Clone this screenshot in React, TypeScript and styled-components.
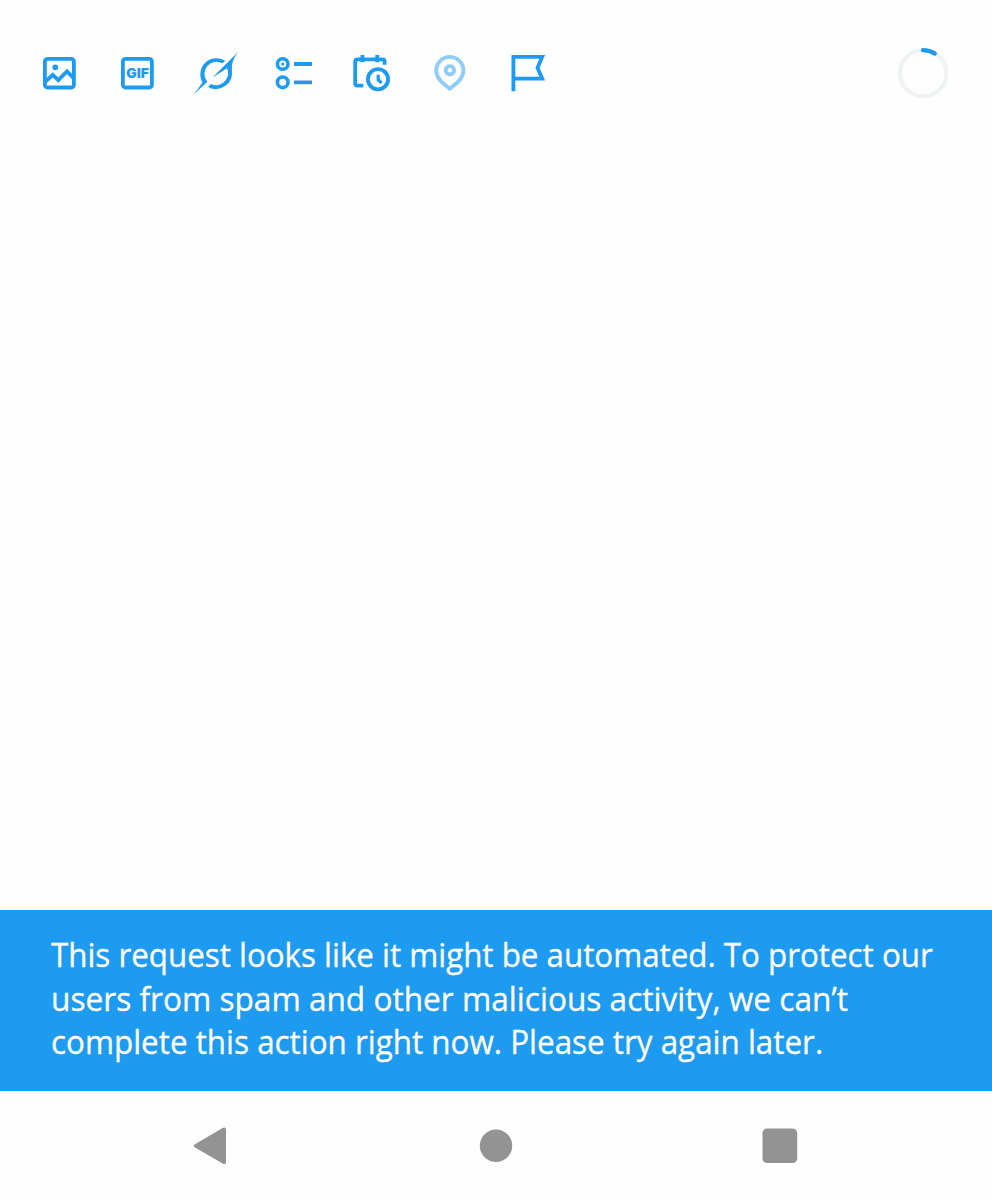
import React from "react";
import styled, { createGlobalStyle } from "styled-components";

const GlobalStyle = createGlobalStyle`
  body { margin: 0; background: #fefefe; }
`;

const Screen = styled.main`
  display: flex;
  flex-direction: column;
  height: 1200px;
  overflow: hidden;
  background: #fefefe;
`;

const Toolbar = styled.header`
  display: flex;
  align-items: center;
  justify-content: space-between;
  height: 54px;
  padding: 46px 42px 0 35px;
`;

const Tools = styled.div`
  display: flex;
  gap: 30px;
`;

const ToolButton = styled.button<{ $disabled?: boolean }>`
  width: 48px;
  height: 48px;
  padding: 0;
  border: 0;
  background: none;
  color: ${(p) => (p.$disabled ? "#8ecdf8" : "#1d9bf0")};
`;

const Glyph = styled.svg`
  display: block;
  width: 48px;
  height: 48px;
  overflow: visible;
  fill: none;
  stroke: currentColor;
  stroke-width: 3.8;
`;

const Progress = styled.svg`
  width: 54px;
  height: 54px;
  fill: none;
  stroke-width: 4.2;
`;

const Compose = styled.section`
  flex: 1;
`;

const Toast = styled.div`
  box-sizing: border-box;
  height: 181px;
  padding: 23.4px 51px 0;
  background: #1d9bf0;
  color: #fff;
  font: 400 33px/43.7px "Open Sans", "Noto Sans", sans-serif;
  -webkit-text-stroke: 0.3px #fff;
`;

const Line = styled.span<{ $condense: number }>`
  display: block;
  width: max-content;
  white-space: nowrap;
  transform: scaleX(${(p) => p.$condense});
  transform-origin: left;
`;

const NavBar = styled.nav`
  display: flex;
  align-items: center;
  justify-content: space-between;
  height: 108.5px;
  padding: 1px 188px 0 186px;
`;

const NavButton = styled.button`
  padding: 0;
  border: 0;
  background: none;
  color: #939393;
`;

const NavGlyph = styled.svg`
  display: block;
  width: 48px;
  height: 48px;
  fill: currentColor;
`;

const tools: { name: string; disabled?: boolean; art: React.ReactNode }[] = [
  {
    name: "Media",
    art: (
      <>
        <rect x="9.9" y="9.9" width="29" height="28.6" rx="2.6" />
        <path d="M9.9 33.2 17.7 25.9 23.3 31.2 32 22.4 39 29.4" />
        <circle cx="20.3" cy="18.3" r="2.9" fill="currentColor" stroke="none" />
      </>
    ),
  },
  {
    name: "GIF",
    art: (
      <>
        <rect x="9.9" y="9.9" width="29" height="28.6" rx="2.6" />
        <text
          x="13.2"
          y="29"
          textLength="22.6"
          lengthAdjust="spacingAndGlyphs"
          fill="currentColor"
          stroke="none"
          fontFamily="Inter, sans-serif"
          fontWeight="900"
          fontSize="13.4"
        >
          GIF
        </text>
      </>
    ),
  },
  {
    name: "Grok",
    art: (
      <g fill="currentColor" stroke="none">
        <path d="M34.3 11.8A16.2 16.2 0 0 0 11.3 33.2C10.2 35.8 6.4 40.6 2.7 45.3L16.5 32.8 15.5 31.5A12 12 0 0 1 31.3 14.3Z" />
        <path d="M47 3 21.3 28.7 36 19.2 36.8 21.6A12 12 0 0 1 20 34.9L17 37.9A16.2 16.2 0 0 0 40.9 21.4C40.9 14.5 41.6 11 47 3Z" />
      </g>
    ),
  },
  {
    name: "Poll",
    art: (
      <>
        <circle cx="13.7" cy="15" r="5.3" strokeWidth="3.6" />
        <circle cx="13.7" cy="33.3" r="5.3" strokeWidth="3.6" />
        <circle cx="13.7" cy="15" r="1.6" fill="currentColor" stroke="none" />
        <path d="M25 15H43M25 33.3H43" />
      </>
    ),
  },
  {
    name: "Schedule",
    art: (
      <>
        <path d="M16.3 36.7H10.6Q8.2 36.7 8.2 34.3V12.7Q8.2 10.3 10.6 10.3H35.2Q37.6 10.3 37.6 12.7V15.8" />
        <path d="M15.4 6V13.2M30.2 6V13.2" />
        <circle cx="31" cy="30.3" r="10.1" />
        <path d="M31.2 25.7V30.7L34.6 34" strokeWidth="3.2" />
      </>
    ),
  },
  {
    name: "Location",
    disabled: true,
    art: (
      <>
        <path d="M24.8 39.7C20 35.8 11.2 30.3 11.2 21.4A13.6 13.6 0 0 1 38.4 21.4C38.4 30.3 29.6 35.8 24.8 39.7Z" />
        <circle cx="24.9" cy="21.3" r="4.2" />
      </>
    ),
  },
  {
    name: "Flag",
    art: <path d="M10.4 42.3V7.9H39.2L34.5 18.8 39.2 29.7H10.4" />,
  },
];

export default function App() {
  return (
    <Screen>
      <GlobalStyle />
      <Toolbar>
        <Tools>
          {tools.map((t) => (
            <ToolButton key={t.name} aria-label={t.name} $disabled={t.disabled}>
              <Glyph viewBox="0 0 48 48">{t.art}</Glyph>
            </ToolButton>
          ))}
        </Tools>
        <Progress viewBox="0 0 54 54">
          <circle cx="27.2" cy="27.2" r="23.2" stroke="#eff3f4" />
          <path d="M27 4.2A23.2 23.2 0 0 1 38.8 7.6" stroke="#1d9bf0" strokeLinecap="round" />
        </Progress>
      </Toolbar>
      <Compose />
      <Toast role="alert">
        <Line $condense={0.949}>This request looks like it might be automated. To protect our</Line>
        <Line $condense={0.958}>users from spam and other malicious activity, we can’t</Line>
        <Line $condense={0.951}>complete this action right now. Please try again later.</Line>
      </Toast>
      <NavBar>
        <NavButton aria-label="Back">
          <NavGlyph viewBox="0 0 48 48">
            <path d="M9 22.3 37 5.8Q40 4.6 40 7.8V39.8Q40 43 37 41.8L9 25.5Q6.5 23.9 9 22.3Z" />
          </NavGlyph>
        </NavButton>
        <NavButton aria-label="Home">
          <NavGlyph viewBox="0 0 48 48">
            <circle cx="25" cy="23.7" r="16.2" />
          </NavGlyph>
        </NavButton>
        <NavButton aria-label="Recent apps">
          <NavGlyph viewBox="0 0 48 48">
            <rect x="6.5" y="6.6" width="34.7" height="34.5" rx="4.5" />
          </NavGlyph>
        </NavButton>
      </NavBar>
    </Screen>
  );
}
